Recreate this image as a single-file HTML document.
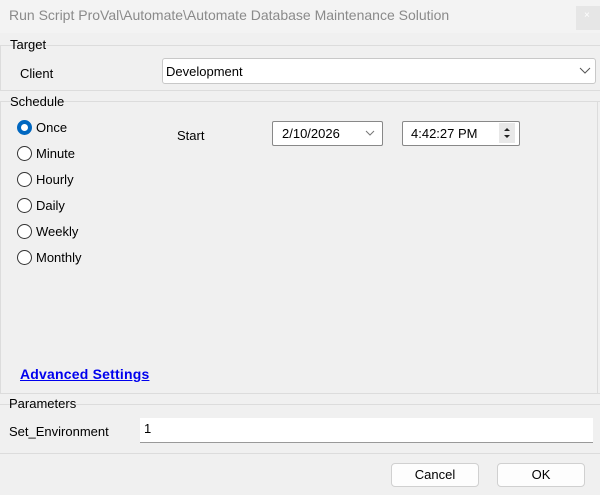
<!DOCTYPE html>
<html><head><style>
body{margin:0;width:600px;height:495px;background:#f0f0f0;font-family:"Liberation Sans",sans-serif;font-size:13px;color:#000;position:relative;overflow:hidden}
.a{position:absolute}
.t{white-space:nowrap}
.line{position:absolute;height:1px;background:#dcdcdc}
.box{position:absolute;background:#fff;border:1px solid #c8c8c8;border-radius:3px;box-sizing:border-box}
.rad{position:absolute;width:13px;height:13px;border:1px solid #333;border-radius:50%;box-sizing:border-box;background:#fff}
.btn{position:absolute;background:#fdfdfd;border:1px solid #d0d0d0;border-radius:4px;box-sizing:border-box;text-align:center;line-height:22px}
</style></head><body>
<div class="a" style="left:0;top:0;width:600px;height:33px;background:#f3f3f3"></div>
<div class="a t" style="left:9px;top:7px;font-size:14px;color:#8a8a8a">Run Script ProVal\Automate\Automate Database Maintenance Solution</div>
<div class="a" style="left:576px;top:6px;width:24px;height:24px;background:#e6e6e6"></div>
<div class="a t" style="left:584px;top:10px;font-size:10px;color:#fff">×</div>

<div class="line" style="left:0;top:45px;width:600px"></div>
<div class="a" style="left:0;top:45px;width:1px;height:45px;background:#dcdcdc"></div>
<div class="a t" style="left:10px;top:37px">Target</div>
<div class="a t" style="left:20px;top:66px">Client</div>
<div class="box" style="left:162px;top:58px;width:434px;height:26px"></div>
<div class="a t" style="left:166px;top:64px">Development</div>
<svg class="a" style="left:579px;top:67px" width="12" height="8"><path d="M1 1l5 5 5-5" stroke="#555" fill="none"/></svg>
<div class="line" style="left:0;top:90px;width:600px"></div>

<div class="line" style="left:0;top:101px;width:600px"></div>
<div class="a" style="left:0;top:101px;width:1px;height:292px;background:#dcdcdc"></div>
<div class="a" style="left:597px;top:101px;width:1px;height:292px;background:#dcdcdc"></div>
<div class="a t" style="left:10px;top:94px">Schedule</div>
<div class="rad" style="left:17px;top:120px;width:15px;height:15px;border:4px solid #0067c0"></div>
<div class="a t" style="left:36px;top:120px">Once</div>
<div class="rad" style="left:17px;top:146px;width:15px;height:15px"></div><div class="a t" style="left:36px;top:146px">Minute</div>
<div class="rad" style="left:17px;top:172px;width:15px;height:15px"></div><div class="a t" style="left:36px;top:172px">Hourly</div>
<div class="rad" style="left:17px;top:198px;width:15px;height:15px"></div><div class="a t" style="left:36px;top:198px">Daily</div>
<div class="rad" style="left:17px;top:224px;width:15px;height:15px"></div><div class="a t" style="left:36px;top:224px">Weekly</div>
<div class="rad" style="left:17px;top:250px;width:15px;height:15px"></div><div class="a t" style="left:36px;top:250px">Monthly</div>
<div class="a t" style="left:177px;top:128px">Start</div>
<div class="box" style="left:272px;top:121px;width:111px;height:25px;border-color:#888;border-radius:2px"></div>
<div class="a t" style="left:282px;top:126px">2/10/2026</div>
<svg class="a" style="left:365px;top:130px" width="10" height="7"><path d="M1 1l4 4 4-4" stroke="#777" fill="none"/></svg>
<div class="box" style="left:402px;top:121px;width:118px;height:25px;border-color:#888;border-radius:2px"></div>
<div class="a t" style="left:411px;top:126px">4:42:27 PM</div>
<div class="a" style="left:499px;top:123px;width:16px;height:20px;background:#e8e8e8"></div>
<svg class="a" style="left:501px;top:125px" width="12" height="16"><path d="M3 6l3-3 3 3z M3 10l3 3 3-3z" fill="#222"/></svg>
<div class="a t" style="left:20px;top:366px;font-size:14px;color:#0000ee;font-weight:bold;text-decoration:underline;letter-spacing:0.2px">Advanced Settings</div>
<div class="line" style="left:0;top:393px;width:600px"></div>

<div class="line" style="left:0;top:404px;width:600px"></div>
<div class="a t" style="left:9px;top:396px">Parameters</div>
<div class="a t" style="left:9px;top:424px">Set_Environment</div>
<div class="a" style="left:140px;top:418px;width:453px;height:24px;background:#fff;border-bottom:1px solid #999"></div>
<div class="a t" style="left:144px;top:421px">1</div>
<div class="line" style="left:0;top:453px;width:600px"></div>
<div class="btn" style="left:391px;top:463px;width:88px;height:24px">Cancel</div>
<div class="btn" style="left:497px;top:463px;width:88px;height:24px">OK</div>
</body></html>
